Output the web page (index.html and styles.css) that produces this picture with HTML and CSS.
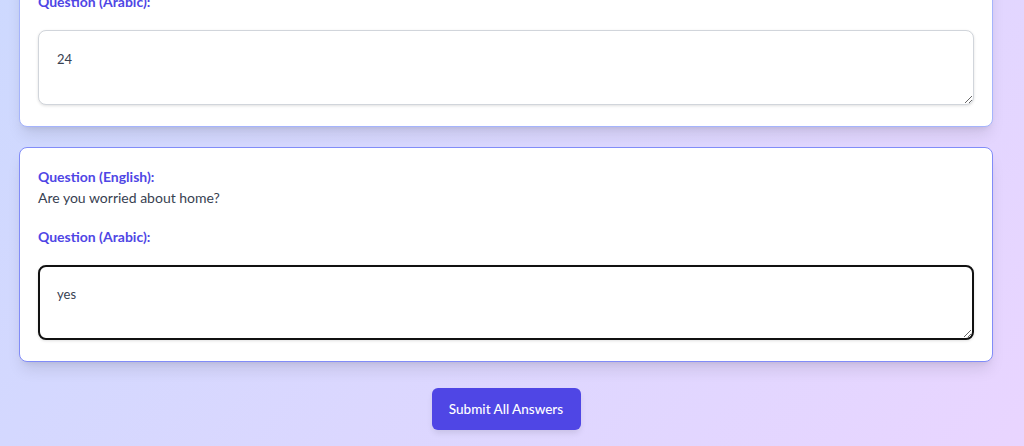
FILE: index.html
```html
<!DOCTYPE html>
<html lang="en">
  <head>
    <meta charset="UTF-8">
    <meta name="viewport" content="width=device-width, initial-scale=1.0">
    <title>Questionnaire</title>
    <link rel="stylesheet" href="styles.css">
  </head>
  <body>
    <main class="page">
      <header class="page-header">
        <h1>Translate the Questionnaire</h1>
        <p>Write the Arabic version of each question below, then submit all answers at once.</p>
      </header>

      <form class="question-list">
        <div class="question-card">
          <h4 class="label">Question (English):</h4>
          <p class="question-text">What is your full name?</p>
          <h4 class="label label-arabic">Question (Arabic):</h4>
          <textarea class="answer" dir="auto">Ahmed</textarea>
        </div>

        <div class="question-card">
          <h4 class="label">Question (English):</h4>
          <p class="question-text">Where are you from?</p>
          <h4 class="label label-arabic">Question (Arabic):</h4>
          <textarea class="answer" dir="auto">Syria</textarea>
        </div>

        <div class="question-card">
          <h4 class="label">Question (English):</h4>
          <p class="question-text">Do you have family here?</p>
          <h4 class="label label-arabic">Question (Arabic):</h4>
          <textarea class="answer" dir="auto">no</textarea>
        </div>

        <div class="question-card">
          <h4 class="label">Question (English):</h4>
          <p class="question-text">How old are you?</p>
          <h4 class="label label-arabic">Question (Arabic):</h4>
          <textarea class="answer" dir="auto">24</textarea>
        </div>

        <div class="question-card question-card-hover">
          <h4 class="label">Question (English):</h4>
          <p class="question-text">Are you worried about home?</p>
          <h4 class="label label-arabic">Question (Arabic):</h4>
          <textarea class="answer answer-focus" dir="auto">yes</textarea>
        </div>

        <div class="actions">
          <button type="button" class="submit-btn">Submit All Answers</button>
        </div>
      </form>
    </main>

    <script src="script.js"></script>
  </body>
</html>
```

FILE: styles.css
```css
html {
    background: linear-gradient(to bottom right, #bfdbfe, #e9d5ff);
    min-height: 100%;
}

body {
    margin: 0;
    font-family: Lato, "Noto Sans", Arial, sans-serif;
    color: #374151;
}

.page {
    max-width: 974px;
    padding: 64px 0 16px;
    margin-left: 19px;
}

.page-header {
    text-align: center;
    margin-bottom: 48px;
}

.page-header h1 {
    margin: 0 0 12px;
    font-size: 32px;
    line-height: 40px;
    color: #312e81;
}

.page-header p {
    margin: 0;
    font-size: 16px;
    line-height: 24px;
    color: #4b5563;
}

.question-list {
    display: flex;
    flex-direction: column;
    gap: 20px;
}

.question-card {
    background: #fff;
    border: 1px solid #a5b4fc;
    border-radius: 8px;
    padding: 19px 18px 21px;
    box-shadow: 0 10px 15px -3px rgba(0, 0, 0, 0.1), 0 4px 6px -4px rgba(0, 0, 0, 0.1);
}

.question-card-hover {
    border-color: #818cf8;
}

.label {
    margin: 0;
    font-size: 14px;
    line-height: 20px;
    font-weight: 700;
    color: #4f46e5;
}

.label-arabic {
    margin-top: 19px;
    margin-bottom: 18px;
}

.question-text {
    margin: 1px 0 0;
    font-size: 14px;
    line-height: 20px;
    color: #374151;
}

.answer {
    display: block;
    box-sizing: border-box;
    width: 100%;
    height: 75px;
    padding: 18px 18px;
    border: 1px solid #d1d5db;
    border-radius: 8px;
    box-shadow: 0 1px 3px rgba(0, 0, 0, 0.12);
    font-family: Lato, "Noto Sans", Arial, sans-serif;
    font-size: 13px;
    line-height: 20px;
    color: #374151;
    background: #fff;
    outline: none;
}

.answer-focus {
    border: 2px solid #111;
    padding: 17px 17px;
}

.actions {
    display: flex;
    justify-content: center;
    padding-top: 6px;
}

.submit-btn {
    width: 149px;
    height: 42px;
    border: none;
    border-radius: 6px;
    background: #4f46e5;
    color: #fff;
    font-family: Lato, "Noto Sans", Arial, sans-serif;
    font-size: 13.5px;
    font-weight: 500;
    cursor: pointer;
    box-shadow: 0 4px 6px -1px rgba(0, 0, 0, 0.1);
}
```

FILE: script.js
```js
// start at the bottom of the list, next to the submit button
function toBottom() {
    window.scrollTo(0, document.documentElement.scrollHeight);
}

toBottom();
window.addEventListener('load', toBottom);
```
